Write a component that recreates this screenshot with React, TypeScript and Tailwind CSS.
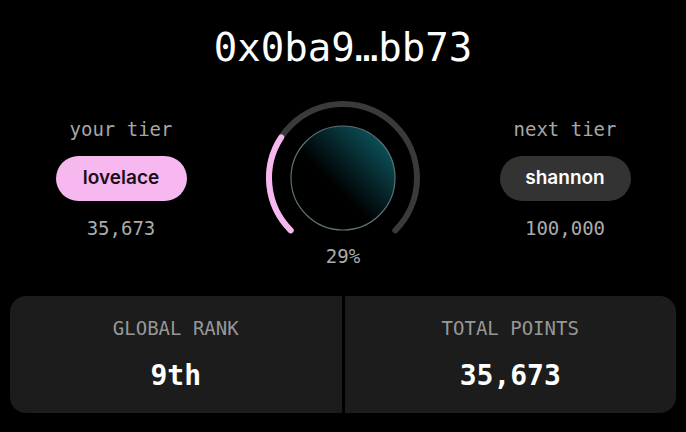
const mono = { fontFamily: '"DejaVu Sans Mono", monospace' }

function Tier({ label, name, points, pill }: { label: string; name: string; points: string; pill: string }) {
  return (
    <div className="flex w-[160px] flex-col items-center gap-[15px]">
      <div className="font-['DejaVu_Sans_Mono',monospace] text-[19px] leading-6 text-[#a6a6a6]">{label}</div>
      <div className={`flex h-[45px] w-[131px] items-center justify-center rounded-full font-['Inter',sans-serif] text-[19px] font-semibold ${pill}`}>
        {name}
      </div>
      <div className="font-['DejaVu_Sans_Mono',monospace] text-[19px] leading-6 text-[#ababab]">{points}</div>
    </div>
  )
}

function Gauge({ pct }: { pct: number }) {
  const r = 74
  const c = 80
  const a0 = (135 * Math.PI) / 180
  const a1 = ((135 + 270 * pct) * Math.PI) / 180
  const sx = c + r * Math.cos(a0)
  const sy = c + r * Math.sin(a0)
  const ex = c + r * Math.cos(a1)
  const ey = c + r * Math.sin(a1)
  return (
    <div className="relative flex w-[160px] flex-col items-center">
      <svg width="160" height="160" viewBox="0 0 160 160">
        <defs>
          <linearGradient id="orb" x1="0" y1="1" x2="1" y2="0">
            <stop offset="0.42" stopColor="#000" />
            <stop offset="1" stopColor="#0f6874" />
          </linearGradient>
        </defs>
        <path d={`M ${sx} ${sy} A ${r} ${r} 0 1 1 ${c * 2 - sx} ${sy}`} fill="none" stroke="#3a3a3a" strokeWidth="6" strokeLinecap="round" />
        <path d={`M ${sx} ${sy} A ${r} ${r} 0 0 1 ${ex} ${ey}`} fill="none" stroke="#f6b8ef" strokeWidth="6" strokeLinecap="round" />
        <circle cx={c} cy={c} r="52" fill="url(#orb)" stroke="#5e7076" strokeWidth="1.2" />
      </svg>
      <div className="absolute top-[146px] font-['DejaVu_Sans_Mono',monospace] text-[19px] leading-6 text-[#ababab]">
        {Math.round(pct * 100)}%
      </div>
    </div>
  )
}

export default function App() {
  return (
    <div className="flex h-[432px] w-full flex-col items-center bg-black text-white">
      <h1 className="mt-[24px] text-[39px] leading-[48px] text-white" style={mono}>
        0x0ba9…bb73
      </h1>
      <div className="mt-[26px] flex items-center justify-center gap-[62px]">
        <Tier label="your tier" name="lovelace" points="35,673" pill="bg-[#f6b8ef] text-[#1b0f1a]" />
        <Gauge pct={0.29} />
        <Tier label="next tier" name="shannon" points="100,000" pill="bg-[#333333] text-white" />
      </div>
      <div className="mt-[38px] w-full px-[10px]">
        <div className="grid h-[117px] grid-cols-2 gap-[3px] overflow-hidden rounded-2xl bg-black">
          {[
            ["GLOBAL RANK", "9th"],
            ["TOTAL POINTS", "35,673"],
          ].map(([k, v]) => (
            <div key={k} className="flex flex-col items-center bg-[#1c1c1c] pt-[20px]">
              <div className="font-['DejaVu_Sans_Mono',monospace] text-[19px] leading-6 text-[#979797]">{k}</div>
              <div className="mt-[20px] font-['DejaVu_Sans_Mono',monospace] text-[28px] font-bold leading-8 text-white">{v}</div>
            </div>
          ))}
        </div>
      </div>
    </div>
  )
}
